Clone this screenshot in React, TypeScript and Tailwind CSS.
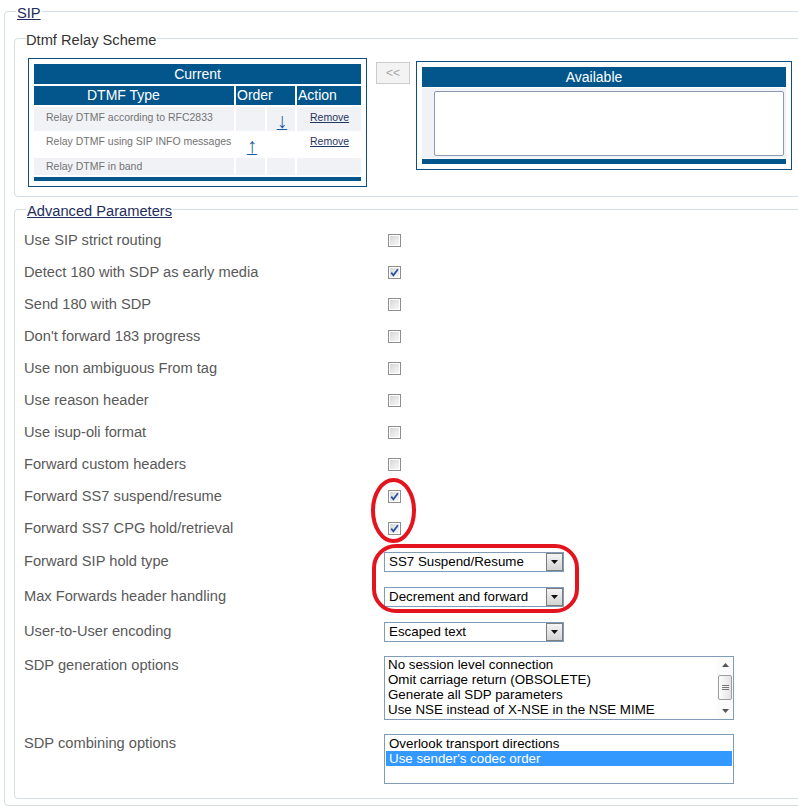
import React from 'react';

interface DtmfRow {
  label: string;
  up?: boolean;
  down?: boolean;
  remove?: boolean;
}

const dtmfRows: DtmfRow[] = [
  { label: 'Relay DTMF according to RFC2833', down: true, remove: true },
  { label: 'Relay DTMF using SIP INFO messages', up: true, remove: true },
  { label: 'Relay DTMF in band' },
];

const checkRows: { label: string; checked: boolean }[] = [
  { label: 'Use SIP strict routing', checked: false },
  { label: 'Detect 180 with SDP as early media', checked: true },
  { label: 'Send 180 with SDP', checked: false },
  { label: "Don't forward 183 progress", checked: false },
  { label: 'Use non ambiguous From tag', checked: false },
  { label: 'Use reason header', checked: false },
  { label: 'Use isup-oli format', checked: false },
  { label: 'Forward custom headers', checked: false },
  { label: 'Forward SS7 suspend/resume', checked: true },
  { label: 'Forward SS7 CPG hold/retrieval', checked: true },
];

const sdpGeneration = [
  'No session level connection',
  'Omit carriage return (OBSOLETE)',
  'Generate all SDP parameters',
  'Use NSE instead of X-NSE in the NSE MIME',
];

function Checkbox({ checked }: { checked: boolean }) {
  return (
    <span className="ml-[4px] mt-[2px] flex h-[13px] w-[13px] border border-[#8e8e8e] bg-white p-px">
      <span className="flex flex-1 items-center justify-center bg-linear-to-br from-[#d6d7d9] to-[#f8f8f8]">
        {checked && (
          <svg width="9" height="9" viewBox="0 0 9 9">
            <path d="M1.2 4.6 L3.4 7.3 L7.9 1.2" fill="none" stroke="#2a4ea6" strokeWidth="1.7" />
          </svg>
        )}
      </span>
    </span>
  );
}

function Select({ value }: { value: string }) {
  return (
    <div className="flex h-[20px] w-[180px] items-stretch border border-[#7f9db9] bg-white text-[13.33px] leading-[18px] text-black">
      <span className="flex-1 pl-[4px]">{value}</span>
      <span className="flex w-[17px] items-center justify-center border border-[#7c7c7c] bg-linear-to-b from-[#f4f4f4] to-[#d4d4d4]">
        <svg width="7" height="4" viewBox="0 0 7 4">
          <path d="M0 0 H7 L3.5 4 Z" fill="#111" />
        </svg>
      </span>
    </div>
  );
}

function Triangle({ down }: { down?: boolean }) {
  return (
    <svg width="7" height="4" viewBox="0 0 7 4">
      <path d={down ? 'M0 0 H7 L3.5 4 Z' : 'M0 4 H7 L3.5 0 Z'} fill="#555" />
    </svg>
  );
}

function Label({ children }: { children: React.ReactNode }) {
  return <span className="w-[360px] shrink-0 pt-px text-[14.67px] leading-[16px] text-[#595959]">{children}</span>;
}

export default function App() {
  return (
    <div className="relative h-[807px] w-[798px] overflow-hidden bg-white font-['Liberation_Sans',Arial,sans-serif]">
      <fieldset className="ml-[4px] mt-[1px] w-[830px] rounded-[4px] border border-[#d5dde5] pb-[6px] pl-[9px] pt-[7px]">
        <legend className="ml-[2px] px-px pt-[4px] text-[14.67px] leading-[16px] text-[#1e2d5c] underline">SIP</legend>

        {/* Dtmf relay scheme */}
        <fieldset className="rounded-[4px] border border-[#d5dde5] pb-[9px] pl-[11px] pt-[10px]">
          <legend className="pr-px pt-[4px] text-[14.67px] leading-[16px] text-[#333]">Dtmf Relay Scheme</legend>
          <div className="flex items-start">
            <div className="ml-[2px] w-[339px] border border-[#0d4f80] p-[5px] pb-[5px]">
              <div className="flex flex-col gap-[2px] text-white">
                <div className="flex h-[20px] items-center justify-center bg-[#02568b] text-[14px]">Current</div>
                <div className="flex h-[19px] gap-[2px] text-[14px] leading-[19px]">
                  <span className="w-[200px] bg-[#02568b] pl-[53px]">DTMF Type</span>
                  <span className="w-[59px] bg-[#02568b] pl-px">Order</span>
                  <span className="w-[64px] bg-[#02568b] pl-px">Action</span>
                </div>
                {dtmfRows.map((r, i) => (
                  <div
                    key={i}
                    className={
                      i === 0
                        ? 'flex h-[24px] gap-[2px] text-[10.5px] text-[#727272]'
                        : i === 1
                        ? 'flex h-[23px] gap-[2px] text-[10.5px] text-[#727272]'
                        : 'flex h-[17px] gap-[2px] text-[10.5px] text-[#727272]'
                    }
                  >
                    <span className={i === 1 ? 'flex w-[200px] items-center whitespace-nowrap bg-white pb-[5px] pl-[12px]' : i === 0 ? 'flex w-[200px] items-center whitespace-nowrap bg-[#f1f2f6] pb-[3px] pl-[12px]' : 'flex w-[200px] items-center whitespace-nowrap bg-[#f1f2f6] pl-[12px]'}>
                      {r.label}
                    </span>
                    <span className={i === 1 ? 'flex w-[29px] items-center justify-center bg-white pl-[3px] pt-[2px]' : 'flex w-[29px] items-center justify-center bg-[#f1f2f6]'}>
                      {r.up && <a className="text-[21px] leading-[16px] text-[#1a5ca6] underline decoration-1">↑</a>}
                    </span>
                    <span className={i === 1 ? 'flex w-[28px] items-center justify-center bg-white' : 'flex w-[28px] items-center justify-center bg-[#f1f2f6] pl-[2px] pt-[3px]'}>
                      {r.down && <a className="text-[21px] leading-[16px] text-[#1a5ca6] underline decoration-1">↓</a>}
                    </span>
                    <span className={i === 1 ? 'flex w-[64px] items-center bg-white pb-[5px] pl-[13px]' : 'flex w-[64px] items-center bg-[#f1f2f6] pb-[3px] pl-[13px]'}>
                      {r.remove && <a className="text-[#1f3562] underline">Remove</a>}
                    </span>
                  </div>
                ))}
                <div className="h-[4px] bg-[#02568b]" />
              </div>
            </div>

            <button className="ml-[9px] mt-[4px] h-[22px] w-[34px] border border-[#cbcbcb] bg-[#f3f3f3] text-[12px] text-[#a8a8a8]">
              &lt;&lt;
            </button>

            <div className="ml-[6px] mt-[3px] w-[376px] border border-[#0d4f80] p-[5px]">
              <div className="flex h-[20px] items-center justify-center bg-[#02568b] pr-[20px] text-[14px] text-white">Available</div>
              <div className="mt-px flex h-[70px] bg-[#f1f2f6] pb-[2px] pl-[12px] pr-[2px] pt-[3px]">
                <div className="flex-1 rounded-[2px] border border-[#8a9ab2] bg-white" />
              </div>
              <div className="mt-px h-[5px] bg-[#02568b]" />
            </div>
          </div>
        </fieldset>

        {/* Advanced parameters */}
        <fieldset className="mt-[2px] rounded-[4px] border border-[#d5dde5] pb-[7px] pl-[9px] pt-[4px]">
          <legend className="ml-[2px] px-px pt-[4px] text-[14.67px] leading-[16px] text-[#1e2d5c] underline">Advanced Parameters</legend>

          {checkRows.map((r) => (
            <div key={r.label} className="flex h-[32px] items-center">
              <Label>{r.label}</Label>
              <Checkbox checked={r.checked} />
            </div>
          ))}

          <div className="flex items-start pb-[7px] pt-[9px]">
            <Label>Forward SIP hold type</Label>
            <Select value="SS7 Suspend/Resume" />
          </div>
          <div className="flex items-start pb-[7px] pt-[8px]">
            <Label>Max Forwards header handling</Label>
            <Select value="Decrement and forward" />
          </div>
          <div className="flex items-start pb-[7px] pt-[8px]">
            <Label>User-to-User encoding</Label>
            <Select value="Escaped text" />
          </div>

          <div className="flex items-start py-[7px]">
            <Label>SDP generation options</Label>
            <div className="flex h-[64px] w-[350px] border border-[#7f9db9] bg-white">
              <div className="flex-1 whitespace-nowrap pl-[3px] text-[13.33px] leading-[15px] text-black">
                {sdpGeneration.map((o) => (
                  <div key={o}>{o}</div>
                ))}
              </div>
              <div className="flex w-[16px] flex-col bg-[#fbfbfb]">
                <div className="flex h-[16px] items-center justify-center">
                  <Triangle />
                </div>
                <div className="mx-px mt-[2px] flex h-[25px] items-center justify-center rounded-[2px] border border-[#9d9d9d] bg-linear-to-r from-[#fdfdfd] to-[#e2e2e2]">
                  <svg width="7" height="7" viewBox="0 0 7 7">
                    <path d="M0 1.5 H7 M0 3.5 H7 M0 5.5 H7" stroke="#777" strokeWidth="1" />
                  </svg>
                </div>
                <div className="flex-1" />
                <div className="flex h-[16px] items-center justify-center">
                  <Triangle down />
                </div>
              </div>
            </div>
          </div>

          <div className="flex items-start py-[7px]">
            <Label>SDP combining options</Label>
            <div className="h-[50px] w-[350px] whitespace-nowrap border border-[#7f9db9] bg-white pt-[1px] text-[13.33px] leading-[15px]">
              <div className="pl-[4px] text-black">Overlook transport directions</div>
              <div className="mx-px bg-[#3399ff] pl-[3px] text-white">Use sender's codec order</div>
            </div>
          </div>
        </fieldset>
      </fieldset>

      {/* red annotation marks drawn over the form */}
      <svg className="pointer-events-none absolute left-0 top-0" width="798" height="807">
        <ellipse cx="393.5" cy="510.5" rx="20.5" ry="30.5" fill="none" stroke="#e3141d" strokeWidth="4" />
        <rect x="374" y="546" width="203" height="65" rx="22" fill="none" stroke="#e3141d" strokeWidth="4" />
      </svg>
    </div>
  );
}
